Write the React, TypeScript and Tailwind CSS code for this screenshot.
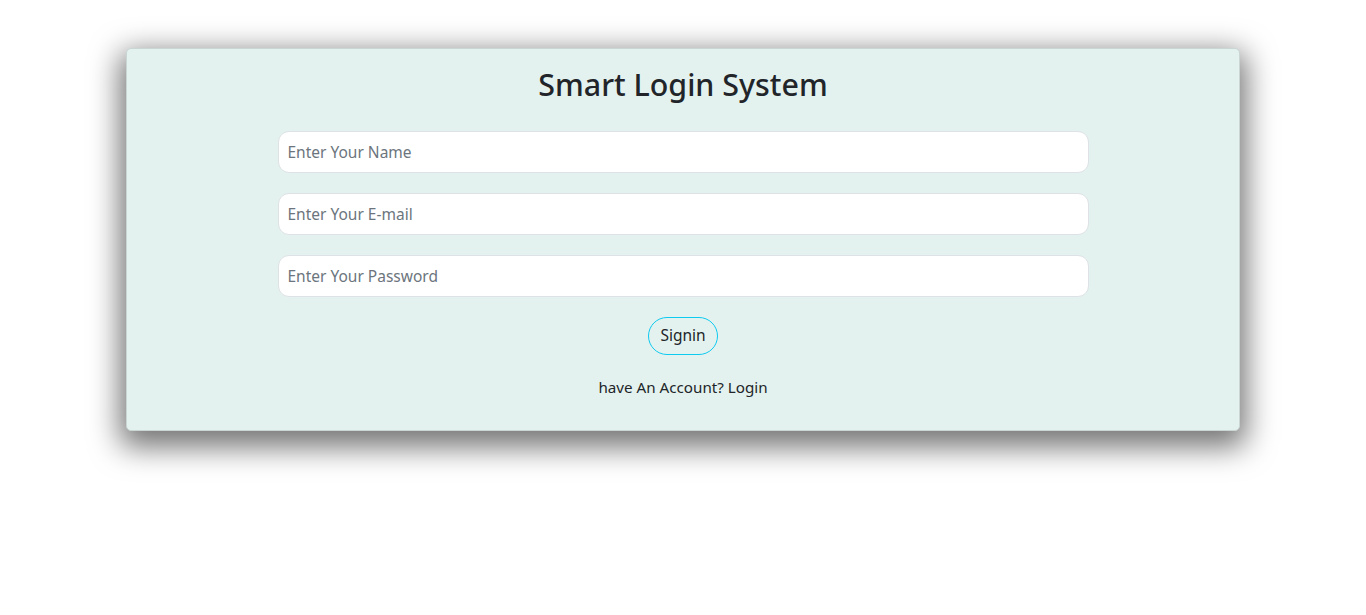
import React from "react";

export default function App() {
  return (
    <div className="min-h-[615px] bg-white pt-[48px]" style={{ fontFamily: '"Noto Sans", "Open Sans", sans-serif' }}>
      <div className="mx-auto w-[1114px] rounded-[5px] border border-[#c9d6d3] bg-[#e4f2ef] px-4 pt-[17px] pb-[31px] shadow-[0_10px_30px_6px_rgba(0,0,0,0.55)]">
        <h1 className="text-center text-[30.4px] font-medium leading-[38px] text-[#212529]">Smart Login System</h1>
        <div className="mx-auto mt-[27px] flex w-[811px] flex-col gap-[20px]">
          <input
            className="h-[42px] w-full rounded-[11px] border border-[#dee2e6] bg-white px-[9px] text-[15.5px] text-[#212529] outline-none placeholder:text-[#6c757d]"
            placeholder="Enter Your Name"
          />
          <input
            className="h-[42px] w-full rounded-[11px] border border-[#dee2e6] bg-white px-[9px] text-[15.5px] text-[#212529] outline-none placeholder:text-[#6c757d]"
            placeholder="Enter Your E-mail"
          />
          <input
            className="h-[42px] w-full rounded-[11px] border border-[#dee2e6] bg-white px-[9px] text-[15.5px] text-[#212529] outline-none placeholder:text-[#6c757d]"
            placeholder="Enter Your Password"
          />
        </div>
        <div className="mt-[20px] flex justify-center">
          <button className="h-[38px] w-[70px] rounded-full border border-[#0dcaf0] text-[15.5px] text-[#212529]">Signin</button>
        </div>
        <p className="mt-[20px] text-center text-[15.2px] leading-[24px] text-[#212529]">have An Account? Login</p>
      </div>
    </div>
  );
}
